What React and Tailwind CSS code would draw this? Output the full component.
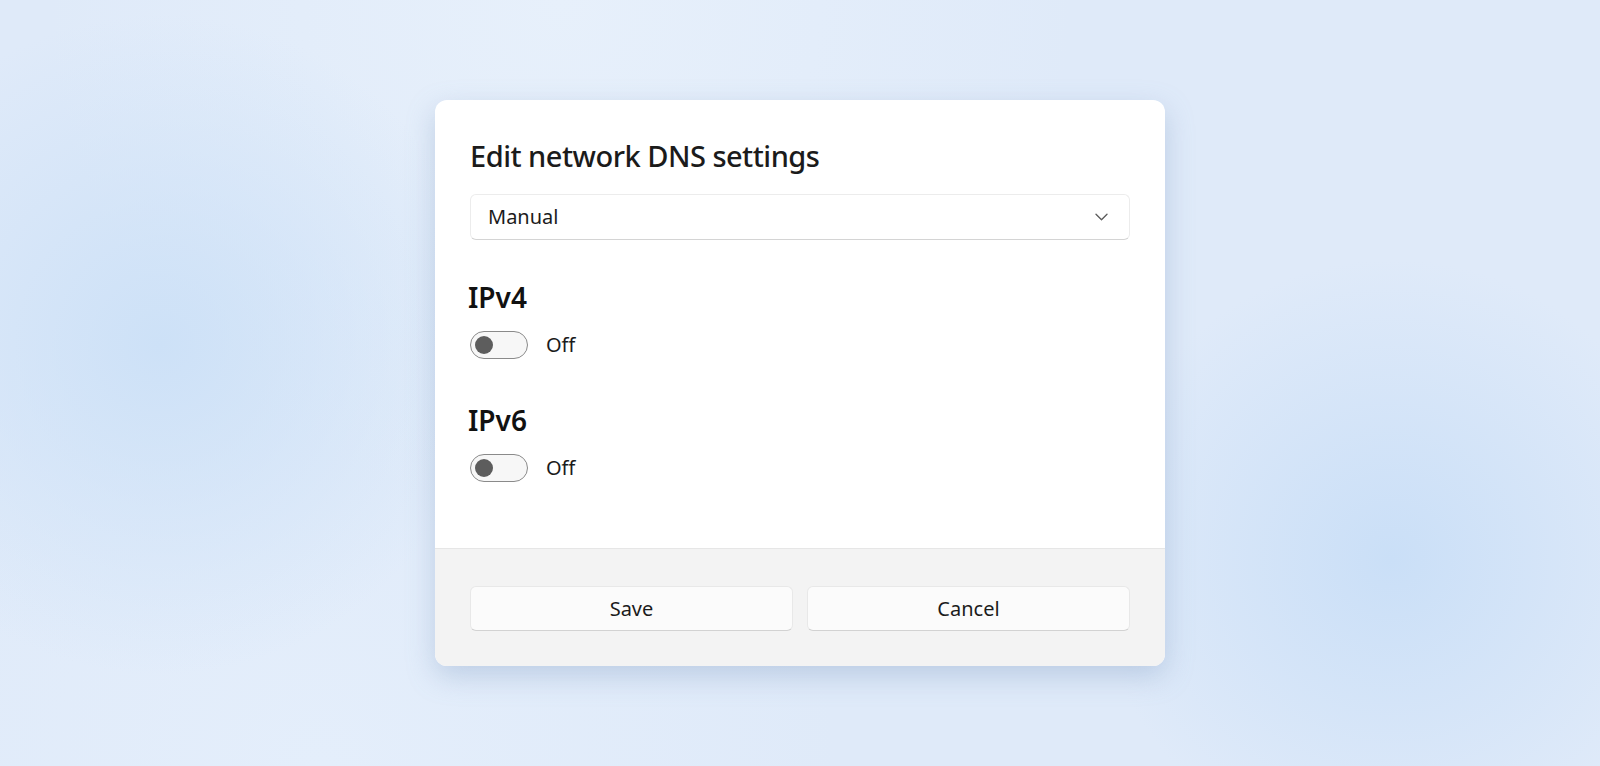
const font = { fontFamily: '"Noto Sans", "Open Sans", sans-serif' }

function Chevron() {
  return (
    <svg width="13" height="8" viewBox="0 0 13 8" fill="none" className="text-[#5f5f5f]">
      <path d="M1 1.2l5.5 5.5L12 1.2" stroke="currentColor" strokeWidth="1.4" strokeLinecap="round" strokeLinejoin="round" />
    </svg>
  )
}

function Toggle({ label }) {
  return (
    <div className="mt-4 flex items-center">
      <div className="flex h-[28px] w-[58px] items-center rounded-full border-[1.5px] border-[#8a8a8a] bg-[#f7f7f7] pl-[4px]">
        <div className="h-[18px] w-[18px] rounded-full bg-[#5d5d5d]"></div>
      </div>
      <span className="ml-[18px] text-[20px] leading-[28px] text-[#1b1b1b]">{label}</span>
    </div>
  )
}

export default function App() {
  return (
    <div
      style={font}
      className="flex h-[766px] w-full items-center justify-center bg-[#dfeaf9] bg-[radial-gradient(circle_at_10%_45%,#cde1f7_0%,rgba(205,225,247,0)_22%),radial-gradient(circle_at_87%_73%,#cadff7_0%,rgba(202,223,247,0)_20%),radial-gradient(circle_at_35%_0%,#e7f0fb_0%,rgba(231,240,251,0)_40%),radial-gradient(circle_at_20%_100%,#e4eefb_0%,rgba(228,238,251,0)_35%)]"
    >
      <div className="flex h-[566px] w-[730px] flex-col overflow-hidden rounded-[12px] bg-white shadow-[0_10px_28px_rgba(120,150,190,0.35)]">
        {/* Body */}
        <div className="flex-1 px-[35px] pt-[36px]">
          <h1 className="text-[29px] font-medium leading-[40px] tracking-[-0.5px] text-[#1b1b1b]">Edit network DNS settings</h1>

          <div className="mt-[18px] flex h-[46px] items-center justify-between rounded-[6px] border border-[#ececec] border-b-[#d4d4d4] bg-white pl-[17px] pr-[21px]">
            <span className="text-[20px] text-[#1b1b1b]">Manual</span>
            <Chevron />
          </div>

          <h2 className="-ml-[2px] mt-[39px] text-[28px] font-semibold leading-[36px] text-[#111]">IPv4</h2>
          <Toggle label="Off" />

          <h2 className="-ml-[2px] mt-[43px] text-[28px] font-semibold leading-[36px] text-[#111]">IPv6</h2>
          <Toggle label="Off" />
        </div>

        {/* Footer */}
        <div className="grid h-[118px] grid-cols-2 gap-[14px] border-t border-[#e6e6e6] bg-[#f3f3f3] px-[35px] pt-[37px]">
          <button className="h-[45px] rounded-[6px] border border-[#e8e8e8] border-b-[#d2d2d2] bg-[#fbfbfb] text-[20px] text-[#1b1b1b]">Save</button>
          <button className="h-[45px] rounded-[6px] border border-[#e8e8e8] border-b-[#d2d2d2] bg-[#fbfbfb] text-[20px] text-[#1b1b1b]">Cancel</button>
        </div>
      </div>
    </div>
  )
}
